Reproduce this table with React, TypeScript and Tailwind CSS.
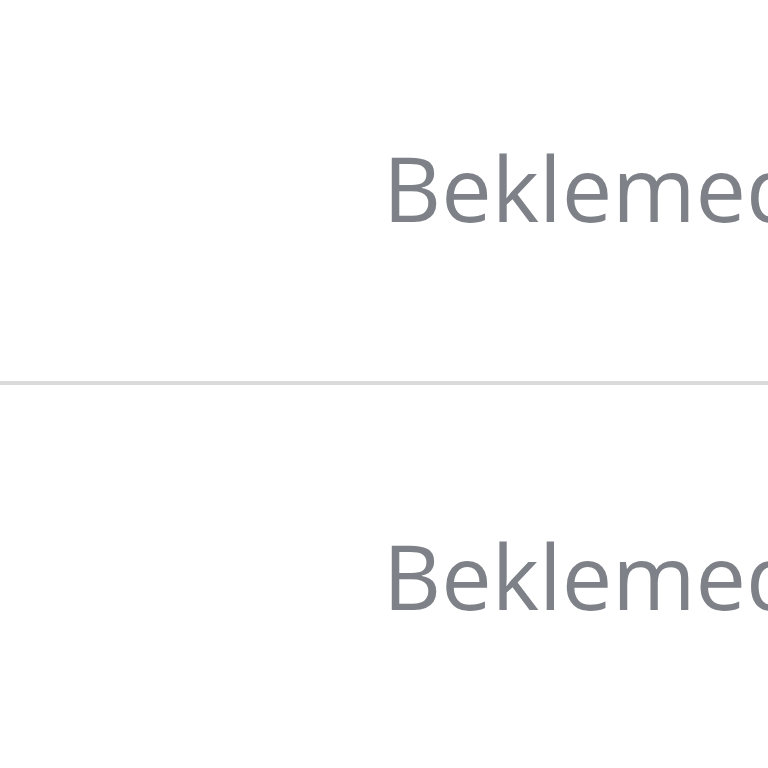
import React from 'react';

const rows = ['Beklemede', 'Beklemede'];

export default function App() {
  return (
    <div className="w-[768px] h-[768px] overflow-hidden bg-white" style={{ fontFamily: '"Open Sans", "Noto Sans", sans-serif' }}>
      <div className="flex flex-col">
        {rows.map((label, i) => (
          <div
            key={i}
            className={
              i === 0
                ? 'pl-[383px] pt-[142px] pb-[149px] border-b-[4px] border-[#dadada]'
                : 'pl-[383px] pt-[145px] pb-[150px]'
            }
          >
            <div className="text-[90px] leading-none text-[#7e8288] whitespace-nowrap">{label}</div>
          </div>
        ))}
      </div>
    </div>
  );
}
